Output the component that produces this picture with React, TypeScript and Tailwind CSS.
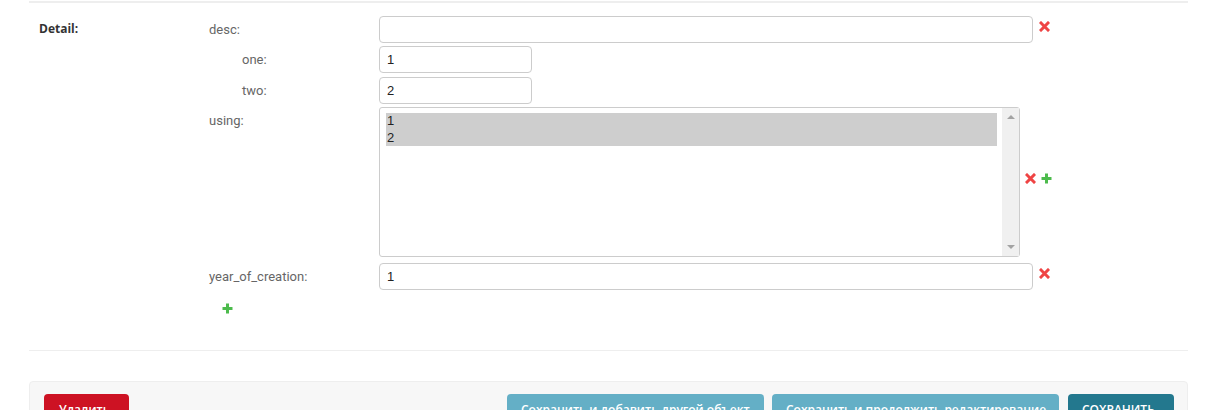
import { ReactNode } from "react";

const RemoveIcon = () => (
	<svg width="11" height="11" viewBox="0 0 11 11" className="shrink-0">
		<path d="M2 2 L9 9 M9 2 L2 9" stroke="#ef4444" strokeWidth="3" strokeLinecap="square" />
	</svg>
);

const AddIcon = () => (
	<svg width="11" height="11" viewBox="0 0 11 11" className="shrink-0">
		<path d="M5.5 0.5 V10.5 M0.5 5.5 H10.5" stroke="#4cbb4c" strokeWidth="3" />
	</svg>
);

const Label = ({ children, indent }: { children: ReactNode; indent?: boolean }) => (
	<div
		className={`w-[170px] shrink-0 pt-[4px] text-[13px] text-[#666] ${indent ? "pl-[33px]" : ""}`}
	>
		{children}
	</div>
);

const TextInput = ({ value, width }: { value: string; width: string }) => (
	<div
		className={`${width} h-[27px] rounded-[4px] border border-[#ccc] bg-white px-[7px] flex items-center text-[13px] text-[#222] font-['Liberation_Sans',Arial,sans-serif]`}
	>
		{value}
	</div>
);

const App = () => {
	return (
		<div className="w-[1208px] h-[410px] overflow-hidden bg-white font-['Roboto',sans-serif]">
			<div className="ml-[29px] mr-[20px] mt-px border-t-2 border-[#eee] h-[349px] pt-[13px] pl-[10px] flex">
				<div className="w-[170px] shrink-0 pt-[4px] text-[12px] font-bold text-[#333] font-['Open_Sans',sans-serif]">
					Detail:
				</div>
				<div className="flex flex-col">
					<div className="flex items-start">
						<Label>desc:</Label>
						<TextInput value="" width="w-[654px]" />
						<div className="ml-[6px] mt-[5px]">
							<RemoveIcon />
						</div>
					</div>
					<div className="flex items-start mt-[3px]">
						<Label indent>one:</Label>
						<TextInput value="1" width="w-[153px]" />
					</div>
					<div className="flex items-start mt-[4px]">
						<Label indent>two:</Label>
						<TextInput value="2" width="w-[153px]" />
					</div>
					<div className="flex items-start mt-[3px]">
						<Label>using:</Label>
						<div className="w-[641px] h-[150px] rounded-[3px] border border-[#ccc] bg-white flex">
							<div className="flex-1 pl-[6px] pr-[5px] pt-[5px] text-[13px] text-[#222] leading-[16.5px] font-['Liberation_Sans',Arial,sans-serif]">
								<div className="bg-[#cecece] pl-px">1</div>
								<div className="bg-[#cecece] pl-px">2</div>
							</div>
							<div className="w-[17px] bg-[#f0f0f0] flex flex-col justify-between items-center py-[7px]">
								<div className="w-0 h-0 border-x-[4px] border-x-transparent border-b-[4px] border-b-[#a3a3a3]" />
								<div className="w-0 h-0 border-x-[4px] border-x-transparent border-t-[4px] border-t-[#a3a3a3]" />
							</div>
						</div>
						<div className="ml-[5px] mt-[66px] flex items-center gap-[5px]">
							<RemoveIcon />
							<AddIcon />
						</div>
					</div>
					<div className="flex items-start mt-[6px]">
						<Label>year_of_creation:</Label>
						<TextInput value="1" width="w-[654px]" />
						<div className="ml-[6px] mt-[5px]">
							<RemoveIcon />
						</div>
					</div>
					<div className="pl-[13px] mt-[13px]">
						<AddIcon />
					</div>
				</div>
			</div>
			<div className="ml-[29px] mr-[20px] border-t border-[#eee] pt-[30px]">
				<div className="h-[60px] rounded-[4px] border border-[#eee] bg-[#f7f7f7] pt-[12px] pl-[14px] pr-[13px] flex items-start font-['Open_Sans',sans-serif] text-[12px] font-semibold text-white">
					<div className="w-[85px] h-[36px] rounded-[4px] bg-[#cd1223] pl-[15px] pt-[7px]">
						Удалить
					</div>
					<div className="ml-auto w-[257px] h-[36px] rounded-[4px] bg-[#64afc6] pl-[14px] pt-[7px] whitespace-nowrap">
						Сохранить и добавить другой объект
					</div>
					<div className="ml-[8px] w-[287px] h-[36px] rounded-[4px] bg-[#64afc6] pl-[14px] pt-[7px] whitespace-nowrap">
						Сохранить и продолжить редактирование
					</div>
					<div className="ml-[9px] w-[106px] h-[36px] rounded-[4px] bg-[#23788e] pl-[14px] pt-[7px] whitespace-nowrap uppercase">
						Сохранить
					</div>
				</div>
			</div>
		</div>
	);
};

export default App;
